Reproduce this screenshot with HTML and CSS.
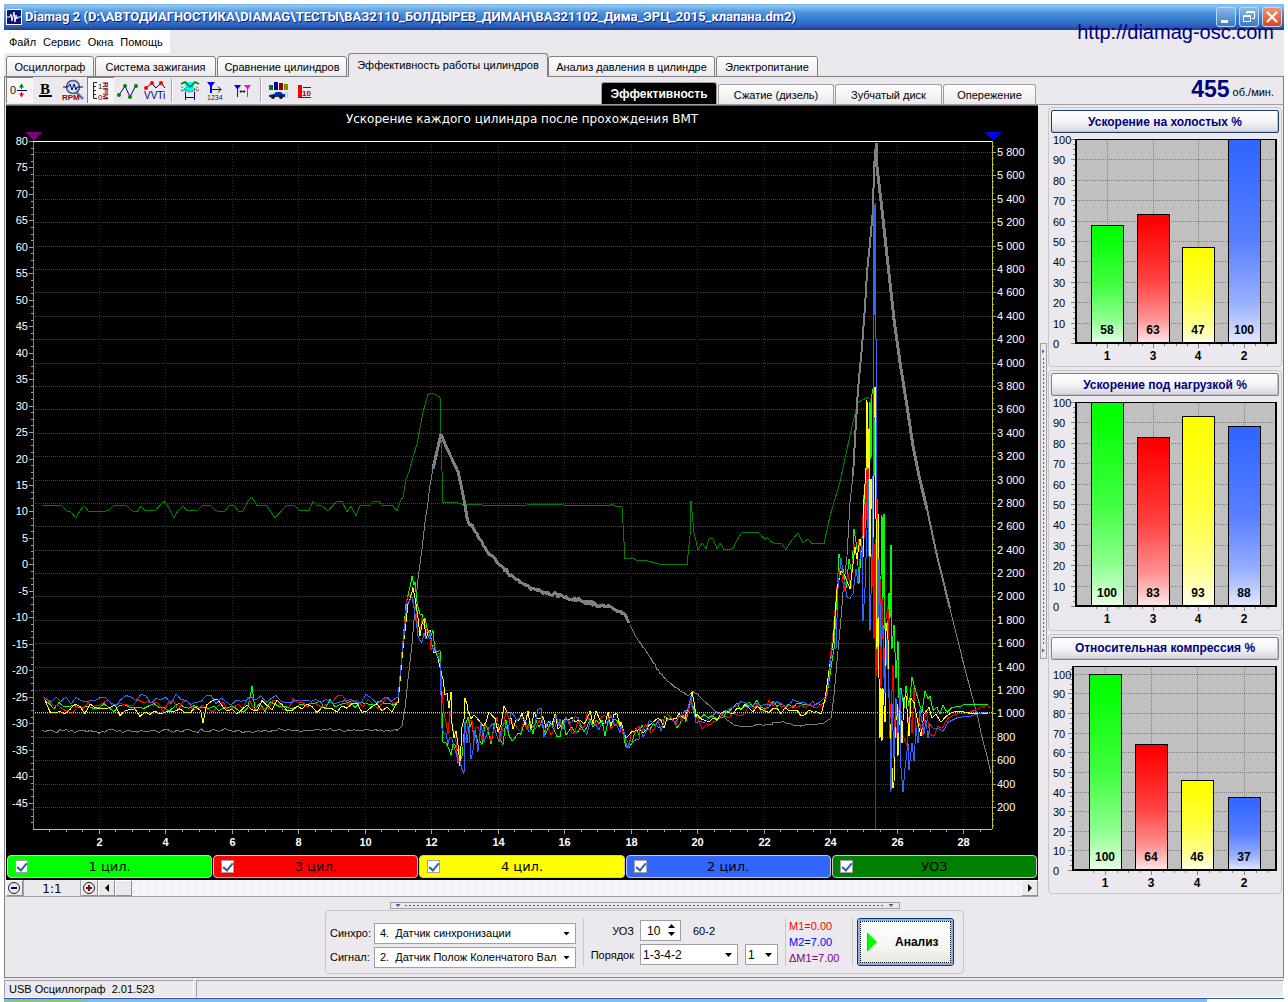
FILE: index.html
```html
<!DOCTYPE html>
<html lang="ru">
<head>
<meta charset="utf-8">
<title>Diamag 2</title>
<link rel="stylesheet" href="styles.css">
</head>
<body>
<div class="window">
  <header class="titlebar">
    <svg class="app-icon" width="16" height="16" viewBox="0 0 16 16"><rect width="16" height="16" fill="#fff"/><rect x="1" y="1" width="14" height="14" fill="#0a1478"/><path d="M1 8h3l1-3 1 7 2-9 1 10 1-7 1 4 1-2h3" fill="none" stroke="#fff"/></svg>
    <h1 class="title">Diamag 2 (D:\АВТОДИАГНОСТИКА\DIAMAG\ТЕСТЫ\ВАЗ2110_БОЛДЫРЕВ_ДИМАН\ВАЗ21102_Дима_ЭРЦ_2015_клапана.dm2)</h1>
    <div class="win-buttons">
      <button class="win-btn" type="button" aria-label="Свернуть"><svg width="18" height="18"><rect x="4" y="12" width="7" height="3" fill="#fff"/></svg></button>
      <button class="win-btn" type="button" aria-label="Восстановить"><svg width="18" height="18" fill="none" stroke="#fff"><path d="M6.5 6V3.5h8v7H12M6.5 4.500h8M3.500 7.500h7v6h-7zM3.500 8.500h7"/></svg></button>
      <button class="win-btn win-close" type="button" aria-label="Закрыть"><svg width="18" height="18" fill="none" stroke="#fff" stroke-width="2"><path d="M4 4l10 10M14 4L4 14"/></svg></button>
    </div>
    <a class="site" href="http://diamag-osc.com">http://diamag-osc.com</a>
  </header>

  <nav class="menu">
    <button type="button">Файл</button><button type="button">Сервис</button><button type="button">Окна</button><button type="button">Помощь</button>
  </nav>

  <div class="tabs" role="tablist">
    <button class="tab t-osc" role="tab" type="button">Осциллограф</button>
    <button class="tab t-ign" role="tab" type="button">Система зажигания</button>
    <button class="tab t-cmp" role="tab" type="button">Сравнение цилиндров</button>
    <button class="tab tab-on" role="tab" type="button" aria-selected="true">Эффективность работы цилиндров</button>
    <button class="tab t-prs" role="tab" type="button">Анализ давления в цилиндре</button>
    <button class="tab t-pow" role="tab" type="button">Электропитание</button>
  </div>

  <main class="panel">
    <div class="toolbar">
      <div class="tools">
        <button class="tool pressed" type="button" aria-label="Ноль"><svg width="24" height="24"><text x="2" y="16" font-size="11" class="ic-t">0</text><path d="M9 12.500h10" stroke="#000080"/><path d="M13.500 11V7M13.500 14v4" stroke="#444"/><path d="M11 9.500l2.500-4 2.500 4z" fill="#008000"/><path d="M11 15.500l2.500 4 2.500-4z" fill="#f00"/></svg></button>
        <button class="tool" type="button" aria-label="Жирная линия"><svg width="24" height="24"><text x="5" y="16" font-size="15" class="ic-b">B</text><rect x="4" y="17" width="13" height="2"/></svg></button>
        <button class="tool" type="button" aria-label="Лупа RPM"><svg width="24" height="24"><path d="M14 14l7 7" stroke="#8a8a90" stroke-width="3"/><path d="M15 15l6 6" stroke="#4060c0" stroke-width="1"/><circle cx="11" cy="9" r="6.500" fill="#c4e6fa" stroke="#556" stroke-width="1.500"/><path d="M1 9h5l2-3 2 6 2-6 2 6 1-3h6" fill="none" stroke="#000080"/><text x="0" y="22" font-size="8" class="ic-r">RPM</text></svg></button>
        <button class="tool pressed" type="button" aria-label="Масштаб RPM"><svg width="24" height="24"><path d="M8 4.500H4.500v16H8M4 8.500h3M4 12.500h3M4 16.500h3" fill="none" stroke="#222"/><text x="9" y="11" font-size="8" class="ic-t">1</text><text x="9" y="22" font-size="8" class="ic-t">0</text><text transform="translate(14 4) rotate(90)" x="0" y="0" font-size="8" class="ic-r">RPM</text></svg></button>
        <button class="tool" type="button" aria-label="Точки"><svg width="24" height="24"><path d="M3 17l6-9 5 11 6-12" fill="none" stroke="#000080"/><g fill="#008000"><circle cx="3" cy="17" r="2"/><circle cx="9" cy="8" r="2"/><circle cx="14" cy="19" r="2"/><circle cx="20" cy="8" r="2"/></g></svg></button>
        <button class="tool" type="button" aria-label="VVTi"><svg width="24" height="24"><path d="M3 10l6-5 4 5 5-5 4 5" fill="none" stroke="#000080"/><g fill="#f00"><circle cx="3" cy="10" r="2"/><circle cx="9" cy="5" r="2"/><circle cx="18" cy="5" r="2"/></g><text x="1" y="21" font-size="10" class="ic-n">VVTi</text></svg></button>
        <span class="tool-sep"></span>
        <button class="tool" type="button" aria-label="Фаза"><svg width="24" height="24"><path d="M6 4h11l-2 6 2 4H6l2-4z" fill="#0ff"/><g fill="none"><path d="M3 6l4-2 5 5 5-5 4 2" stroke="#008000" stroke-width="1.500"/><path d="M3 13c4 0 5-5 9-5s5 5 9 5M3 9c4 0 5 5 9 5s5-5 9-5" stroke="#00a090" stroke-dasharray="2 1"/><path d="M3 12h5M16 12h5" stroke="#f00" stroke-dasharray="1 1"/><path d="M7.500 14v8M16.500 14v8M8 19.500h8" stroke="#000080"/></g></svg></button>
        <button class="tool" type="button" aria-label="Маркер 1234"><svg width="24" height="24"><path d="M2 4h8L7 8v7H5V8z" fill="#00f"/><path d="M7 11.500h9M13 8.500l3 3-3 3" fill="none" stroke="#111"/><text x="2" y="22" font-size="7" class="ic-t">1234</text></svg></button>
        <button class="tool" type="button" aria-label="Два маркера"><svg width="24" height="24"><path d="M2 7h7L6 11v8H5v-8z" fill="#00f"/><path d="M12 7h7l-3 4v8h-1v-8z" fill="#f0f"/><path d="M8 13.500h5M9.500 12L8 13.500 9.500 15M11.500 12l1.500 1.500-1.500 1.500" fill="none" stroke="#222"/></svg></button>
        <span class="tool-sep"></span>
        <button class="tool" type="button" aria-label="Диаграмма авто"><svg width="24" height="24"><path fill="#008000" d="M2 7h4v5H2z"/><path fill="#00a" d="M7 4h4v8H7z"/><path fill="#900" d="M12 5h4v7h-4z"/><path fill="#880" d="M17 6h4v6h-4z"/><path d="M2 17l5-1 2-2h5l2 2h2v3H2z" fill="#0030a0"/><circle cx="6" cy="19" r="2" fill="#111"/><circle cx="14" cy="19" r="2" fill="#111"/><path d="M18 15h3M18 17h3M18 19h3" stroke="#aaa" stroke-dasharray="1 1"/></svg></button>
        <button class="tool" type="button" aria-label="Шкала 10"><svg width="24" height="24"><path fill="#f00" d="M4 7h4v12H4z"/><path d="M4 19.500h13M9 9.500h8" stroke="#900"/><text x="8" y="18" font-size="8" class="ic-r">10</text></svg></button>
      </div>
      <div class="subtabs" role="tablist">
        <button class="sub sub-on" role="tab" type="button" aria-selected="true">Эффективность</button>
        <button class="sub s-dis" role="tab" type="button">Сжатие (дизель)</button>
        <button class="sub s-disk" role="tab" type="button">Зубчатый диск</button>
        <button class="sub s-adv" role="tab" type="button">Опережение</button>
      </div>
      <p class="rpm"><strong>455</strong> об./мин.</p>
    </div>

    <div class="work">
      <section class="scope">
        <div class="screen">
          <h2 class="screen-title">Ускорение каждого цилиндра после прохождения ВМТ</h2>
          <div class="plot" id="plot"></div>
          <div class="legend">
            <label class="leg c1"><input type="checkbox" checked><span>1 цил.</span></label>
            <label class="leg c3"><input type="checkbox" checked><span>3 цил.</span></label>
            <label class="leg c4"><input type="checkbox" checked><span>4 цил.</span></label>
            <label class="leg c2"><input type="checkbox" checked><span>2 цил.</span></label>
            <label class="leg cu"><input type="checkbox" checked><span>УОЗ</span></label>
          </div>
        </div>
        <div class="scroll">
          <button class="zoom-btn" type="button" aria-label="Уменьшить"><svg width="14" height="14"><circle cx="7" cy="7" r="5.500" fill="none" stroke="#222"/><rect x="4" y="6" width="6" height="2" fill="#000080"/></svg></button>
          <output class="zoom-val">1:1</output>
          <button class="zoom-btn" type="button" aria-label="Увеличить"><svg width="14" height="14"><circle cx="7" cy="7" r="5.500" fill="none" stroke="#222"/><path d="M4 6h2V4h2v2h2v2H8v2H6V8H4z" fill="#900000"/></svg></button>
          <button class="sb-btn" type="button" aria-label="Влево"><svg width="8" height="8"><path d="M6 0v8L2 4z"/></svg></button>
          <span class="sb-thumb"></span>
          <span class="sb-track"></span>
          <button class="sb-btn" type="button" aria-label="Вправо"><svg width="8" height="8"><path d="M2 0v8l4-4z"/></svg></button>
        </div>
      </section>

      <div class="split-v"><div class="grip-v"></div></div>

      <aside class="bars">
        <section class="group"><button class="group-btn focus" type="button">Ускорение на холостых %</button><div class="bar-plot" data-values="58,63,47,100" data-max="100"></div></section>
        <section class="group"><button class="group-btn" type="button">Ускорение под нагрузкой %</button><div class="bar-plot" data-values="100,83,93,88" data-max="100"></div></section>
        <section class="group"><button class="group-btn" type="button">Относительная компрессия %</button><div class="bar-plot" data-values="100,64,46,37" data-max="104"></div></section>
      </aside>
    </div>

    <div class="grip-h"></div>
    <form class="controls">
      <div class="sources">
        <label for="sync">Синхро:</label>
        <span class="combo"><select id="sync"><option>4.&nbsp; Датчик синхронизации</option></select></span>
        <label for="sig">Сигнал:</label>
        <span class="combo"><select id="sig"><option>2.&nbsp; Датчик Полож Коленчатого Вала</option></select></span>
      </div>
      <div class="timing">
        <div class="line">
          <label class="lbl" for="uoz">УОЗ</label>
          <span class="spin"><input id="uoz" type="number" value="10"></span>
          <span class="teeth">60-2</span>
        </div>
        <div class="line">
          <label class="lbl" for="order">Порядок</label>
          <span class="combo order"><select id="order"><option>1-3-4-2</option></select></span>
          <span class="combo first"><select aria-label="Первый цилиндр"><option>1</option></select></span>
        </div>
      </div>
      <div class="markers"><span class="m1">M1=0.00</span><span class="m2">M2=7.00</span><span class="dm">ΔM1=7.00</span></div>
      <button class="analyze" type="button"><svg width="10" height="20"><path d="M1 1l9 9-9 9z" fill="#0f0"/><path d="M.5 1v18" stroke="#808080"/></svg>Анализ</button>
    </form>
  </main>

  <footer class="status"><span class="st-a">USB Осциллограф &nbsp;2.01.523</span><span class="st-b"></span></footer>
</div>
<div class="taskbar"><span></span></div>
<script src="chart.js"></script>
</body>
</html>
```
FILE: styles.css
```css
* { box-sizing: border-box; }
body {
  margin: 0;
  min-height: 100vh;
  padding: 4px 4px 0;
  display: flex;
  flex-direction: column;
  background: #fff;
  color: #000;
  font: 11px/14px "Liberation Sans", Arial, sans-serif;
}
button, select, input { font: inherit; color: inherit; }
button { padding: 0; border: 0; background: none; }
h1, h2, p { margin: 0; }
.window { flex: 1; display: flex; flex-direction: column; background: #ebe9ed; }

.titlebar {
  position: relative;
  height: 26px;
  flex: none;
  display: flex;
  align-items: center;
  gap: 3px;
  padding: 0 2px;
  background: linear-gradient(#7ab6ec, #8cc4f2 8%, #4d94dc 32%, #3a84d4 50%, #2c5eb8 85%, #1c3c94);
}
.title {
  flex: 1;
  font: bold 13px/16px Roboto, "Open Sans", sans-serif;
  color: #fff;
  text-shadow: 1px 1px 0 #0a1883;
  white-space: nowrap;
}
.win-buttons { display: flex; gap: 3px; }
.win-btn {
  width: 20px;
  height: 20px;
  border: 1px solid #c0d8f4;
  border-radius: 3px;
  background: linear-gradient(#88b8ec, #3c78c4);
}
.win-btn svg { display: block; }
.win-close { background: linear-gradient(#f09078, #d84820); }
.site {
  position: absolute;
  right: 10px;
  top: 16px;
  font-size: 20px;
  line-height: 24px;
  color: #000080;
  text-decoration: none;
}

.menu { align-self: flex-start; display: flex; gap: 7px; width: 166px; height: 23px; padding: 0 5px; background: #fff; }

.tabs { display: flex; align-items: flex-end; height: 24px; padding-left: 2px; margin-bottom: -1px; z-index: 1; }
.tab {
  height: 21px;
  margin-right: 1px;
  border: 1px solid #808080;
  border-radius: 3px 3px 0 0;
  background: linear-gradient(#fff, #ebe9ed);
  white-space: nowrap;
}
.t-osc { width: 88px; }
.t-ign { width: 121px; }
.t-cmp { width: 130px; }
.tab-on { width: 200px; height: 24px; margin: 0; border-bottom-color: #ebe9ed; background: #ebe9ed; }
.t-prs { width: 167px; }
.t-pow { width: 102px; }

.panel { flex: 1; display: flex; flex-direction: column; border: 1px solid #808080; padding-left: 1px; }
.toolbar { display: flex; align-items: flex-end; height: 28px; border-bottom: 1px solid #a0a0a4; }
.tools { flex: 1; display: flex; align-self: flex-start; align-items: center; height: 26px; }
.tool { width: 27px; height: 26px; }
.tool svg { display: block; margin: 0 auto; }
.pressed { background: #f6f5f8; box-shadow: inset 1px 1px 0 #808080; }
.tool-sep { width: 2px; height: 24px; margin: 0 3px; background: #a8a6aa; border-right: 1px solid #fff; }
.ic-t { font-family: "Liberation Sans", sans-serif; fill: #222; }
.ic-b { font-family: "Liberation Serif", serif; font-weight: bold; }
.ic-r { font-family: "Liberation Sans", sans-serif; font-weight: bold; fill: #900; }
.ic-n { font-family: "Liberation Sans", sans-serif; fill: #000080; }

.subtabs { display: flex; align-items: flex-end; gap: 1px; }
.sub { height: 20px; border: 1px solid #a0a0a4; border-bottom: 0; border-radius: 3px 3px 0 0; background: linear-gradient(#fff, #ebe9ed); }
.sub-on { width: 116px; height: 22px; background: #000; color: #fff; font-weight: bold; font-size: 12px; }
.s-dis { width: 116px; }
.s-disk { width: 107px; }
.s-adv { width: 93px; }
.rpm { width: 247px; padding-right: 9px; text-align: right; line-height: 24px; }
.rpm strong { font-size: 23px; color: #000080; vertical-align: -1px; }

.work { flex: 1; display: flex; min-height: 600px; }
.scope { flex: 1; min-width: 0; display: flex; flex-direction: column; border-top: 1px solid #606060; border-bottom: 1px solid #a0a0a4; }
.screen { flex: 1; display: flex; flex-direction: column; background: #000; color: #fff; }
.screen-title { margin-top: 5px; height: 14px; text-align: center; font: 12px/16px "DejaVu Sans", Verdana, sans-serif; }
.plot { flex: 1; min-height: 300px; overflow: hidden; }
.plot svg, .bar-plot svg { display: block; }
.axis { font: 11px "Liberation Sans", Arial, sans-serif; fill: #fff; }
.axis-b { font: bold 11px "Liberation Sans", Arial, sans-serif; fill: #fff; }
.legend { display: grid; grid-template-columns: repeat(5, 1fr); gap: 1px; padding: 0 1px 2px; }
.leg { position: relative; height: 23px; border: 1px solid #c8c8c8; border-radius: 4px; display: flex; align-items: center; justify-content: center; color: #000; font: 13px/16px "DejaVu Sans", Verdana, sans-serif; }
.leg input { appearance: none; width: 13px; height: 13px; margin: 0; border: 1px solid #a0a0a4; background: #fff; position: absolute; left: 7px; top: 4px; }
.leg input:checked::after { content: ""; position: absolute; left: 3px; top: 0; width: 4px; height: 8px; border: solid #3060a8; border-width: 0 2px 2px 0; transform: rotate(40deg); }
.c1 { background: #0f0; }
.c3 { background: #f00; }
.c4 { background: #ff0; }
.c2 { background: #36f; }
.cu { background: #008000; }

.scroll { display: flex; height: 16px; }
.zoom-btn { width: 17px; height: 16px; border: 1px solid; border-color: #fff #909094 #909094 #fff; }
.zoom-btn svg { display: block; }
.zoom-val { width: 58px; border: solid #a0a0a4; border-width: 0 1px; text-align: center; font: 12px/18px "DejaVu Sans", Verdana, sans-serif; }
.sb-btn, .sb-thumb { width: 17px; height: 16px; border: 1px solid; border-color: #fff #909094 #909094 #fff; background: #ebe9ed; }
.sb-btn svg { display: block; margin: 0 auto; }
.sb-track { flex: 1; background: repeating-conic-gradient(#fff 0 25%, #ebe9ed 0 50%) 0 0 / 2px 2px; }

.split-v { width: 10px; display: flex; align-items: center; justify-content: center; }
.grip-v { width: 7px; height: 316px; border: 1px solid #a0a0a4; position: relative; background: linear-gradient(#3060b0 50%, transparent 0) 2px 0 / 1px 4px repeat-y content-box; padding: 14px 0; }
.grip-v::before, .grip-v::after { content: ""; position: absolute; left: 1px; width: 3px; height: 5px; background: #3060b0; clip-path: polygon(0 0, 100% 50%, 0 100%); }
.grip-v::before { top: 5px; }
.grip-v::after { bottom: 5px; }

.bars { width: 235px; display: flex; flex-direction: column; gap: 3px; padding: 2px 1px 3px 0; }
.group { flex: 1; display: flex; flex-direction: column; border: 1px solid #c8c6ca; border-radius: 4px; padding: 2px; min-height: 0; }
.group-btn { height: 23px; flex: none; border: 1px solid #808088; border-radius: 2px; background: linear-gradient(#fff, #f4f4f6 50%, #d6d4dc); color: #000080; font-weight: bold; font-size: 12px; box-shadow: inset -1px -1px 0 #c4c2cc; }
.focus { border-color: #1c3c68; }
.bar-plot { flex: 1; min-height: 0; overflow: hidden; }
.tick-d { font: 11px "Liberation Sans", Arial, sans-serif; fill: #000; }
.val { font: bold 12px "Liberation Sans", Arial, sans-serif; fill: #000; }

.grip-h { align-self: center; flex: none; width: 510px; height: 7px; margin: 5px 0 1px; border: 1px solid #a0a0a4; position: relative; padding: 0 14px; background: linear-gradient(90deg, #3060b0 50%, transparent 0) 0 2px / 4px 1px repeat-x content-box; }
.grip-h::before, .grip-h::after { content: ""; position: absolute; top: 1px; width: 5px; height: 3px; background: #3060b0; clip-path: polygon(0 0, 100% 0, 50% 100%); }
.grip-h::before { left: 5px; }
.grip-h::after { right: 5px; }

.controls { align-self: center; flex: none; display: flex; align-items: center; height: 64px; margin-bottom: 3px; padding: 0 9px 0 4px; border: 1px solid #c8c6ca; border-radius: 4px; }
.sources { display: grid; grid-template-columns: 44px 202px; row-gap: 3px; align-items: center; padding-top: 6px; }
.combo { position: relative; display: block; height: 21px; }
.combo select { appearance: none; width: 100%; height: 21px; padding: 0 18px 0 5px; border: 1px solid #a0a0a4; border-radius: 0; background: #fff; font-size: 12px; }
.sources select { font-size: 11px; }
.combo::after { content: ""; position: absolute; right: 6px; top: 9px; width: 7px; height: 4px; background: #000; clip-path: polygon(0 0, 100% 0, 50% 100%); }
.timing { width: 203px; height: 48px; margin-left: 7px; border: solid #c8c6ca; border-width: 0 1px; padding: 2px 0 0 6px; display: flex; flex-direction: column; gap: 3px; }
.line { display: flex; align-items: center; }
.lbl { width: 44px; margin-right: 6px; text-align: right; white-space: nowrap; }
.order { width: 98px; margin-right: 7px; }
.first { width: 33px; }
.order select, .first select { padding-left: 2px; }
.spin { position: relative; width: 41px; height: 21px; }
.spin input { appearance: textfield; width: 41px; height: 21px; padding: 0 0 0 6px; border: 1px solid #a0a0a4; background: #fff; font-size: 12px; }
.spin input::-webkit-inner-spin-button { display: none; }
.spin::before, .spin::after { content: ""; position: absolute; z-index: 1; right: 6px; width: 7px; height: 4px; background: #000; }
.spin::before { top: 4px; clip-path: polygon(50% 0, 100% 100%, 0 100%); }
.spin::after { bottom: 5px; clip-path: polygon(0 0, 100% 0, 50% 100%); }
.teeth { margin-left: 12px; }
.markers { display: flex; flex-direction: column; width: 67px; height: 48px; line-height: 16px; padding-left: 3px; font-size: 11px; border-right: 1px solid #c8c6ca; white-space: nowrap; }
.m1 { color: #f00; }
.m2 { color: #00f; }
.dm { color: #800080; }
.analyze { display: flex; align-items: center; gap: 18px; width: 97px; height: 48px; margin-left: 4px; padding-left: 9px; border: 1px solid #003c74; border-radius: 3px; background: linear-gradient(#fff, #f6f6f2 60%, #e4e4dc); box-shadow: inset 0 0 0 2px #8cb0e4; outline: 1px dotted #000; outline-offset: -4px; font-weight: bold; font-size: 12px; }

.status { display: flex; gap: 2px; height: 18px; margin-top: 2px; }
.status span { border: 1px solid #a0a0a4; border-right-color: #fff; border-bottom-color: #fff; padding: 1px 4px; }
.st-a { width: 190px; white-space: nowrap; }
.st-b { flex: 1; }
.taskbar { flex: none; height: 4px; border-top: 1px solid #2c58b8; background: linear-gradient(90deg, #80c0ec 94%, #fff 0); }
.taskbar span { display: block; width: 84px; height: 3px; background: #8cc08c; border-radius: 0 4px 0 0; }
```
FILE: chart.js
```js
const NS = "http://www.w3.org/2000/svg";

function el(parent, name, attrs, text) {
  const node = document.createElementNS(NS, name);
  for (const key in attrs) node.setAttribute(key, attrs[key]);
  if (text !== undefined) node.textContent = text;
  parent.appendChild(node);
  return node;
}

function svgFor(host) {
  host.textContent = "";
  const w = host.clientWidth, h = host.clientHeight;
  return { svg: el(host, "svg", { width: w, height: h, "shape-rendering": "crispEdges" }), w, h };
}

const half = v => Math.round(v) + 0.5;

function seeded(seed) {
  return () => (seed = (seed * 16807) % 2147483647) / 2147483647;
}

const REC = { x: 33, y: 141, w: 959, h: 690 };

const parse = s => s.trim().split(/\s+/).map(p => p.split(",").map(Number));

// Keyframes "x,y,amplitude,step" are filled with seeded noise between them.
function wander(keys, seed) {
  const k = parse(keys), rnd = seeded(seed), out = [];
  for (let i = 0; i < k.length - 1; i++) {
    const [x0, y0, a0, step] = k[i], [x1, y1, a1] = k[i + 1];
    for (let x = x0; x < x1; x += step) {
      const t = (x - x0) / (x1 - x0);
      out.push([x, y0 + (y1 - y0) * t + (rnd() + rnd() - 1) * (a0 + (a1 - a0) * t)]);
    }
  }
  return out;
}

const ADVANCE = parse(`42,507 62,507 67,512 71,513 76,519 80,512 84,507 89,513 108,512 113,507 127,507 132,512 137,513 141,507 145,512 155,512 164,502 169,509 174,519 178,512 183,507 187,512 197,512 202,507 211,507 216,512 224,513 229,507 234,507 239,513 243,512 248,502 252,498 257,507 267,507 275,519 286,507 295,507 300,512 309,512 313,502 318,507 322,507 328,512 337,502 342,502 347,513 351,507 356,517 360,507 369,507 374,502 379,502 383,507 393,507 397,512 400,503 403,498 406,480 409,473 413,458 417,445 423,413 428,395 433,394 440,398 441,440 443,504 458,504 463,506 480,506 500,507 530,506 560,506 590,507 613,506 616,508 622,508 625,560 633,559 637,562 647,562 662,566 687,566 690,537 691,502 694,534 698,551 702,544 706,550 709,540 713,540 717,550 720,544 724,551 733,550 737,541 742,534 759,534 764,540 768,539 772,544 782,545 786,551 790,544 798,534 803,544 808,540 812,545 824,545 830,517 840,483 847,450 852,427 858,403 862,401 868,398 870,400 871,413`);

const SPEED = {
  thin1: wander(`42,733,3,3 397,732,2,3 400,730,0,2`, 5).concat(parse(`402,728 405,710 408,681 412,646 415,610 418,580 422,550 425,523 428,503 430,486 433,470`)),
  peak1: parse(`433,470 437,452 441,435 445,445 452,460 458,473`),
  fall1: wander(`458,473,1,2 462,490,1,2 465,508,3,2 468,523,4,2 477,535,2,1 487,552,2,1 497,563,2,1 507,573,3,1 517,581,2,1 530,589,2,1 547,595,3,1 563,598,3,1 580,602,3,1 597,606,3,1 610,608,3,2 625,616,1,2 630,627,1,2`, 9),
  thin2: wander(`630,627,1,2 637,640,1,2 647,654,2,2 658,672,2,2 667,682,1,2 680,692,1,2 688,697,1,2 693,693,1,3 698,697,1,3 713,711,1,3 723,717,2,3 730,724,2,4 740,728,2,4 773,726,2,4 783,723,2,4 797,728,2,4 823,725,1,4 828,722,0,4`, 11).concat(parse(`831,720 834,697 837,663 841,620 843,593 847,557 850,503 853,477`)),
  rise2: parse(`853,477 855,440 858,390 862,347 865,307 867,273 870,243 873,210 874,167 876,143`),
  fall2: parse(`876,143 877,167 882,210 886,247 890,283 894,320 900,363 907,407 913,447 919,477 927,510`),
  tail2: parse(`927,510 937,557 950,610`),
  end2: parse(`950,610 963,663 978,720 982,739 987,758 991,775`)
};

const CYL = [
  { color: "#00ff00", pts: wander(`44,708,8,5 248,710,6,3 252,688,0,3 255,707,8,5 393,706,6,4 398,704,2,3 402,655,2,2 406,605,2,2 412,579,2,2 415,585,5,2 418,612,8,2 425,628,14,2 440,655,14,2 443,740,22,2 460,748,22,2 470,732,22,2 485,734,16,3 560,730,14,3 621,728,12,3 626,746,8,3 636,736,10,3 650,726,12,3 686,721,7,2 691,703,2,3 696,722,5,4 725,716,6,4 745,706,7,4 825,706,3,3 829,684,2,2`, 31),
    tail: `834,650 839,555 843,570 846,590 849,560 852,575 854,530 857,550 859,585 862,540 864,496 865,530 867,430 868,520 870,403 871,460 872,395 873,390 874,478 875,420 876,460 877,600 880,640 882,516 883,600 884,515 885,630 887,650 889,594 890,620 891,546 892,650 894,626 896,680 898,643 899,700 901,690 904,710 906,688 909,708 912,679 915,690 919,704 922,714 925,693 928,700 930,698 933,712 937,709 940,716 943,707 947,714 952,709 960,708 964,706 988,706` },
  { color: "#ff0000", pts: wander(`43,708,11,5 393,705,9,4 398,703,2,3 402,655,2,2 407,600,2,2 411,594,3,2 414,605,5,2 418,624,12,2 425,632,14,2 440,660,8,2 444,720,24,2 460,752,20,2 470,730,24,2 485,730,18,3 560,724,14,3 621,724,12,3 626,744,10,3 636,734,14,3 655,722,14,3 686,718,5,2 690,702,2,2 694,718,5,4 702,730,5,4 725,718,10,4 745,708,10,4 823,708,3,3 828,690,2,2`, 77),
    tail: `833,635 838,575 841,568 844,592 848,575 851,590 854,545 857,560 859,540 861,560 863,516 864,540 866,470 867,520 868,428 869,480 870,520 872,590 873,520 874,640 875,545 876,678 876,500 877,672 878,560 879,648 880,580 881,690 882,600 884,680 886,620 888,608 889,690 891,720 893,667 894,720 896,740 900,698 902,735 904,740 907,747 910,705 912,735 914,690 916,732 919,720 922,738 926,712 930,736 934,738 938,728 942,730 948,720 955,716 970,714 980,709 987,707 990,709` },
  { color: "#ffff00", pts: wander(`45,710,10,5 201,713,6,4 203,725,2,3 207,708,11,5 393,712,8,4 398,706,2,3 402,660,2,2 408,605,2,2 413,589,2,2 416,605,4,2 420,628,14,2 428,632,16,2 440,660,10,2 443,690,18,2 452,710,24,2 460,760,20,2 465,700,16,2 468,712,22,3 480,722,16,3 560,718,16,3 621,720,10,3 626,738,8,3 640,733,12,3 655,724,12,3 686,717,4,2 692,694,1,2 697,720,5,4 725,718,8,4 745,710,8,4 822,715,4,3 827,692,2,2`, 123),
    tail: `833,645 837,590 841,572 844,575 848,585 850,590 853,565 855,548 857,560 860,540 863,560 864,500 866,470 867,401 868,470 869,430 870,560 871,480 873,540 874,420 875,388 876,520 877,650 878,515 879,680 880,740 881,690 882,743 883,690 885,724 886,624 888,640 889,700 891,750 893,790 894,784 895,740 897,705 898,758 900,698 902,745 904,700 906,697 909,738 911,700 914,704 918,725 921,738 924,716 929,709 932,720 936,716 941,724 946,718 952,714 960,713 970,715 988,715` },
  { color: "#3366ff", pts: wander(`46,702,8,5 393,701,6,4 398,700,2,3 402,655,2,2 407,605,2,2 412,599,3,2 416,620,8,2 420,636,12,2 430,642,12,2 440,660,8,2 442,725,26,2 458,765,16,2 465,745,36,2 475,738,22,3 490,732,16,3 560,722,18,3 621,727,12,3 627,748,8,3 640,734,14,3 655,728,14,3 686,716,5,2 691,699,2,2 696,724,5,4 725,716,8,4 745,703,6,4 815,705,5,4 823,703,2,3`, 211),
    tail: `827,697 832,650 836,650 838,590 841,559 844,580 847,598 850,600 853,595 856,570 858,584 860,560 862,545 863,622 865,590 867,530 868,480 870,632 872,560 873,480 874,205 875,315 875,203 876,340 876,480 877,500 878,620 879,560 881,648 883,626 885,695 887,640 889,700 890,740 891,794 892,705 894,760 896,700 898,735 900,690 901,770 903,794 905,770 908,745 909,772 912,745 914,763 916,730 918,745 920,712 924,736 926,722 928,740 930,726 934,731 938,730 943,733 948,724 952,722 958,719 970,718 980,715 988,714` }
];

function drawPlot() {
  const { svg, w, h } = svgFor(document.getElementById("plot"));
  const L = 27, R = w - 46, T = 16, B = h - 26;
  const px = x => L + (x - REC.x) / REC.w * (R - L);
  const py = y => T + (y - REC.y) / REC.h * (B - T);
  const line = (x1, y1, x2, y2, stroke, extra) => el(svg, "line", Object.assign({ x1, y1, x2, y2, stroke }, extra));

  for (let v = 0; v <= 5850; v += 50) {
    const y = half(py(809 - (v - 200) * 657 / 5600));
    if (y > B) continue;
    const major = v % 200 === 0 && v > 0;
    line(R, y, R + (major ? 4 : 2), y, "#a0a0a0");
    if (!major) continue;
    line(L, y, R, y, "#444", { "stroke-dasharray": "1 1" });
    el(svg, "text", { x: R + 5, y: y + 3.5, class: "axis" }, String(v).replace(/(\d)(\d{3})$/, "$1 $2"));
  }
  for (let i = 1; i <= 57; i++) {
    const x = half(px(32.3 + i * 16.62)), major = i % 4 === 0;
    line(x, B, x, B + (major ? 5 : 3), "#a0a0a0");
    if (!major) continue;
    line(x, T, x, B, "#2c2c2c", { "stroke-dasharray": "1 2" });
    el(svg, "text", { x, y: B + 17, "text-anchor": "middle", class: "axis-b" }, i / 2);
  }
  for (let i = 0; i <= 103; i++) {
    const y = half(py(141 + i * 26.54 / 4)), major = i % 4 === 0;
    line(L - (major ? 4 : 2), y, L, y, "#a0a0a0");
    if (major) el(svg, "text", { x: L - 5, y: y + 3.5, "text-anchor": "end", class: "axis" }, 80 - i / 4 * 5);
  }

  const trace = (pts, stroke, width) => el(svg, "polyline", {
    points: pts.map(p => px(p[0]).toFixed(1) + "," + py(p[1]).toFixed(1)).join(" "),
    fill: "none", stroke, "stroke-width": width || 1, "stroke-linejoin": "bevel"
  });
  trace(ADVANCE, "#008000");
  const cursor = half(px(875));
  line(cursor, py(540), cursor, B, "#ff0000");
  trace(SPEED.thin1, "#808080");
  trace(SPEED.peak1, "#808080", 3);
  trace(SPEED.fall1, "#808080", 3);
  trace(SPEED.thin2, "#808080");
  trace(SPEED.rise2, "#808080", 2);
  trace(SPEED.fall2, "#808080", 3);
  trace(SPEED.tail2, "#808080", 2);
  trace(SPEED.end2, "#808080");
  CYL.forEach(c => trace(c.pts.concat(parse(c.tail)), c.color));

  const zero = half(py(714));
  line(L, zero, R, zero, "#60e8e8", { "stroke-dasharray": "1 1" });
  line(half(L), T, half(L), B, "#40b040");
  line(half(R), T, half(R), B, "#c0c040");
  line(L, half(T), R, half(T), "#fff");
  line(L, half(B), R, half(B), "#c0c0c0");
  el(svg, "path", { d: `M${L - 8} ${T - 9}h17l-8 8z`, fill: "#800080" });
  el(svg, "path", { d: `M${R - 8} ${T - 9}h17l-8 8z`, fill: "#0000ff" });
}

const NAMES = ["1", "3", "4", "2"];
const FILLS = [
  ["#00ff00", "#40ff40", "#90ff90", "#e8ffe8"],
  ["#ff0000", "#ff4040", "#ff9090", "#ffe8e8"],
  ["#ffff00", "#ffff40", "#ffff90", "#ffffe8"],
  ["#3366ff", "#5880ff", "#98b0ff", "#e4eaff"]
];

function drawBars(host, index) {
  const { svg, w, h } = svgFor(host);
  const values = host.dataset.values.split(",").map(Number), max = Number(host.dataset.max);
  const L = max > 100 ? 21 : 24, R = w - 3, T = 6, B = h - 21;
  const py = v => B - v / max * (B - T);
  const step = (R - L) * 0.227;
  el(svg, "rect", { x: L, y: T, width: R - L, height: B - T, fill: "#c0c0c0" });
  for (let v = 0; v <= max; v += 2.5) {
    const y = half(py(v)), major = v % 10 === 0;
    el(svg, "line", { x1: L - (major ? 4 : 2), x2: L, y1: y, y2: y, stroke: "#808080" });
    if (!major) continue;
    el(svg, "line", { x1: L, x2: R, y1: y, y2: y, stroke: "#808080", "stroke-dasharray": "1 1" });
    el(svg, "text", { x: 2, y: y + 4, class: "tick-d" }, v);
  }
  const defs = el(svg, "defs", {});
  values.forEach((v, i) => {
    const x = Math.round(L + (R - L) * 0.16 + i * step), y = Math.round(py(v)), id = `g${index}-${i}`;
    const grad = el(defs, "linearGradient", { id, x1: 0, y1: 0, x2: 0, y2: 1 });
    [0.05, 0.5, 0.8, 1].forEach((offset, s) => el(grad, "stop", { offset, "stop-color": FILLS[i][s] }));
    el(svg, "line", { x1: x + 0.5, x2: x + 0.5, y1: T, y2: B, stroke: "#808080", "stroke-dasharray": "1 1" });
    el(svg, "rect", { x: x - 15.5, y: y + 0.5, width: 32, height: B - y, fill: `url(#${id})`, stroke: "#000" });
    el(svg, "text", { x, y: B - 9, "text-anchor": "middle", class: "val" }, v);
    el(svg, "text", { x, y: B + 17, "text-anchor": "middle", class: "val" }, NAMES[i]);
    for (let k = -1; k <= 2; k++) {
      const tx = half(x + k * step / 4);
      el(svg, "line", { x1: tx, x2: tx, y1: B, y2: B + (k ? 3 : 5), stroke: "#808080" });
    }
  });
  el(svg, "path", { d: `M${L} ${T + 0.5}H${R}`, stroke: "#000", fill: "none" });
  el(svg, "path", { d: `M${L + 1} ${T}V${B}H${R}V${T}`, stroke: "#000", "stroke-width": 2, fill: "none" });
}

function draw() {
  drawPlot();
  document.querySelectorAll(".bar-plot").forEach(drawBars);
}
draw();
addEventListener("resize", draw);
```
